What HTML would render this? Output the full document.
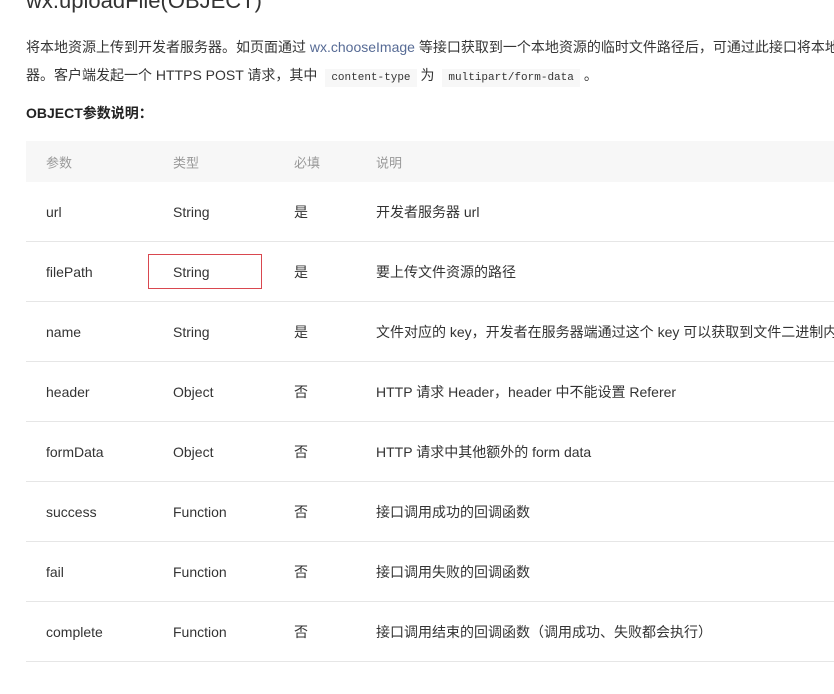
<!DOCTYPE html>
<html><head><meta charset="utf-8"><style>
html,body{margin:0;width:834px;height:694px;overflow:hidden}
body{background:#fff;font-family:"Liberation Sans","Noto Sans CJK SC",sans-serif;color:#333}
.wrap{position:relative;width:834px;height:694px;overflow:hidden}
.t{position:absolute;left:26px;top:-12px;font-size:22px;color:#333;white-space:nowrap}
.p{position:absolute;left:26px;top:33px;font-size:14px;line-height:28px;white-space:nowrap;color:#353535}
.p a{color:#576b95;text-decoration:none}
code{font-family:"Liberation Mono",monospace;font-size:11px;background:#f7f7f7;padding:3px 6px;margin:0 4px;color:#333}
.h{position:absolute;left:26px;top:103px;font-size:14px;font-weight:bold;color:#222}
.tb{position:absolute;left:26px;top:141px;width:808px}
.r{position:relative;height:59px;border-bottom:1px solid #e6e6e6;font-size:14px;color:#333}
.r span{position:absolute;top:50%;transform:translateY(-50%);white-space:nowrap}
.hd{height:41px;background:#f7f7f7;border:none;color:#999;font-size:13px}
.c1{left:20px}.c2{left:147px}.c3{left:268px}.c4{left:350px}
.box{position:absolute;left:148px;top:254px;width:112px;height:33px;border:1px solid #d9484f}
</style></head><body><div class="wrap">
<div class="t">wx.uploadFile(OBJECT)</div>
<div class="p">将本地资源上传到开发者服务器。如页面通过 <a>wx.chooseImage</a> 等接口获取到一个本地资源的临时文件路径后，可通过此接口将本地资源上传到指定服务<br>器。客户端发起一个 HTTPS POST 请求，其中 <code>content-type</code>为 <code>multipart/form-data</code>。</div>
<div class="h">OBJECT参数说明：</div>
<div class="tb">
<div class="r hd"><span class="c1">参数</span><span class="c2">类型</span><span class="c3">必填</span><span class="c4">说明</span></div>
<div class="r"><span class="c1">url</span><span class="c2">String</span><span class="c3">是</span><span class="c4">开发者服务器 url</span></div>
<div class="r"><span class="c1">filePath</span><span class="c2">String</span><span class="c3">是</span><span class="c4">要上传文件资源的路径</span></div>
<div class="r"><span class="c1">name</span><span class="c2">String</span><span class="c3">是</span><span class="c4">文件对应的 key，开发者在服务器端通过这个 key 可以获取到文件二进制内容</span></div>
<div class="r"><span class="c1">header</span><span class="c2">Object</span><span class="c3">否</span><span class="c4">HTTP 请求 Header，header 中不能设置 Referer</span></div>
<div class="r"><span class="c1">formData</span><span class="c2">Object</span><span class="c3">否</span><span class="c4">HTTP 请求中其他额外的 form data</span></div>
<div class="r"><span class="c1">success</span><span class="c2">Function</span><span class="c3">否</span><span class="c4">接口调用成功的回调函数</span></div>
<div class="r"><span class="c1">fail</span><span class="c2">Function</span><span class="c3">否</span><span class="c4">接口调用失败的回调函数</span></div>
<div class="r"><span class="c1">complete</span><span class="c2">Function</span><span class="c3">否</span><span class="c4">接口调用结束的回调函数（调用成功、失败都会执行）</span></div>
</div>
<div class="box"></div>
</div></body></html>
